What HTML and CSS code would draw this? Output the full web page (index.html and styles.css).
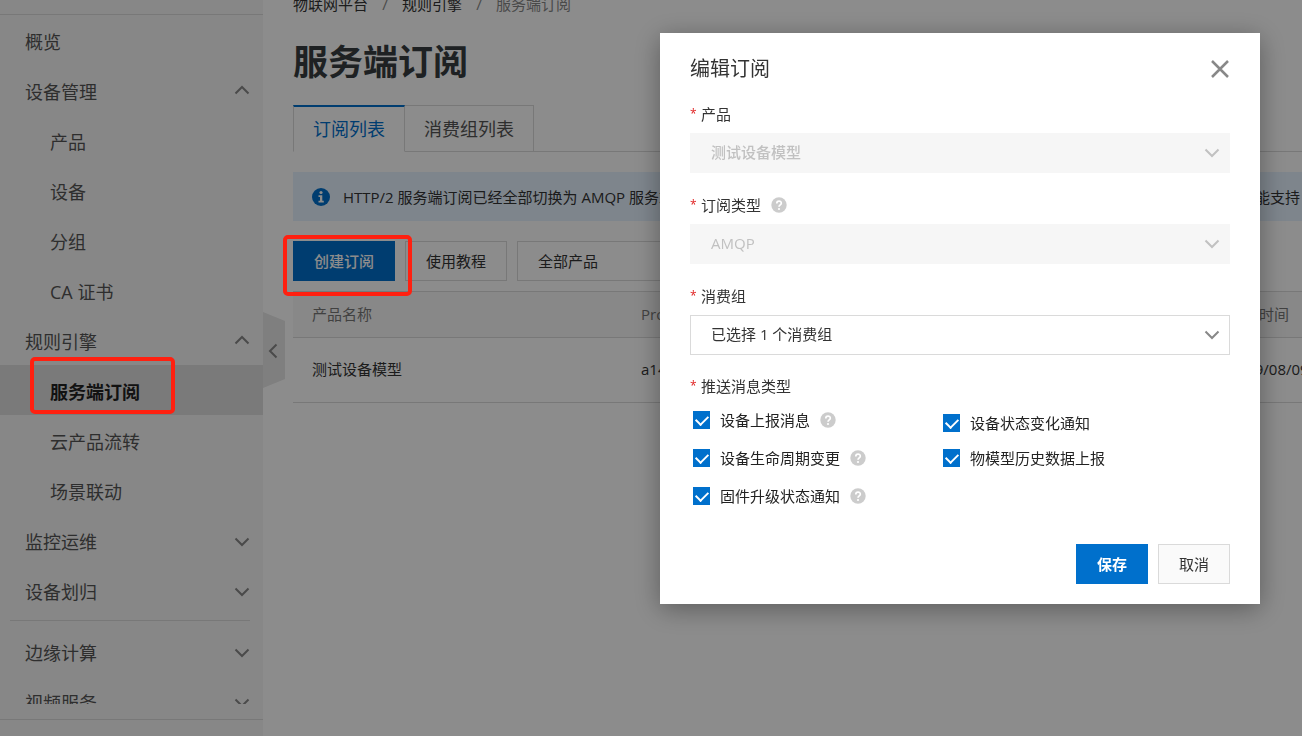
FILE: index.html
```html
<!DOCTYPE html>
<html lang="zh-CN">
<head>
<meta charset="utf-8">
<title>服务端订阅</title>
<link rel="stylesheet" href="styles.css">
</head>
<body>
<svg width="0" height="0" class="sprite" aria-hidden="true">
  <symbol id="down" viewBox="0 0 16 16"><path d="M1.5 4.5 8 11l6.500-6.500"/></symbol>
  <symbol id="up" viewBox="0 0 16 16"><path d="M1.500 9.500 8 3l6.500 6.500"/></symbol>
  <symbol id="left" viewBox="0 0 16 16"><path d="M11.500 1.500 5 8l6.500 6.500"/></symbol>
  <symbol id="help" viewBox="0 0 16 16"><circle cx="8" cy="8" r="7.700" fill="#ccc" stroke="none"/><path d="M5.800 6.400C5.800 3.400 10.400 3.500 10.300 6.200 10.300 7.800 8 7.900 8 9.700" stroke="#fff" stroke-width="1.700"/><circle cx="8" cy="12" r="1.100" fill="#fff" stroke="none"/></symbol>
</svg>

<div class="app">
  <aside class="sidebar">
    <div class="sidebar-top"></div>
    <nav class="menu">
      <a class="item" href="#"><span>概览</span></a>
      <a class="item" href="#"><span>设备管理</span><svg class="icon"><use href="#up"/></svg></a>
      <a class="item sub" href="#"><span>产品</span></a>
      <a class="item sub" href="#"><span>设备</span></a>
      <a class="item sub" href="#"><span>分组</span></a>
      <a class="item sub" href="#"><span>CA 证书</span></a>
      <a class="item" href="#"><span>规则引擎</span><svg class="icon"><use href="#up"/></svg></a>
      <a class="item sub active" href="#"><span>服务端订阅</span></a>
      <a class="item sub" href="#"><span>云产品流转</span></a>
      <a class="item sub" href="#"><span>场景联动</span></a>
      <a class="item" href="#"><span>监控运维</span><svg class="icon"><use href="#down"/></svg></a>
      <a class="item" href="#"><span>设备划归</span><svg class="icon"><use href="#down"/></svg></a>
      <hr class="divider">
      <a class="item" href="#"><span>边缘计算</span><svg class="icon"><use href="#down"/></svg></a>
      <a class="item" href="#"><span>视频服务</span><svg class="icon"><use href="#down"/></svg></a>
    </nav>
    <div class="sidebar-bottom"></div>
    <button class="collapse" type="button" aria-label="收起"><svg class="icon"><use href="#left"/></svg></button>
  </aside>

  <main class="main">
    <nav class="crumbs">
      <a href="#">物联网平台</a><i>/</i><a href="#">规则引擎</a><i>/</i><span>服务端订阅</span>
    </nav>
    <h1 class="heading">服务端订阅</h1>
    <div class="tabs">
      <button class="tab current" type="button">订阅列表</button>
      <button class="tab" type="button">消费组列表</button>
    </div>
    <div class="notice">
      <svg class="info" viewBox="0 0 18 18"><circle cx="9" cy="9" r="9" fill="#0070cc"/><circle cx="9" cy="4.500" r="1.600" fill="#fff"/><path d="M6.500 7.200h3.800v5.600h1.500v1.700H6.500v-1.700H8V8.900H6.500z" fill="#fff"/></svg>
      <span>HTTP/2 服务端订阅已经全部切换为 AMQP 服务端</span>
      <span class="notice-end">能支持</span>
    </div>
    <div class="toolbar">
      <button class="btn primary" type="button">创建订阅</button>
      <button class="btn" type="button">使用教程</button>
      <select class="select filter" aria-label="产品"><option>全部产品</option></select>
    </div>
    <table class="table">
      <colgroup><col class="col-name"><col><col class="col-time"></colgroup>
      <thead><tr><th>产品名称</th><th>ProductKey</th><th>创建时间</th></tr></thead>
      <tbody><tr><td>测试设备模型</td><td>a14</td><td>2019/08/09</td></tr></tbody>
    </table>
  </main>
</div>

<div class="overlay">
  <form class="dialog" role="dialog" aria-labelledby="dialog-title">
    <header class="dialog-head">
      <h2 id="dialog-title">编辑订阅</h2>
      <button class="close" type="button" aria-label="关闭"><svg viewBox="0 0 20 20"><path d="M2 2l16 16M18 2 2 18"/></svg></button>
    </header>

    <div class="field">
      <div class="label"><b>*</b><label for="product">产品</label></div>
      <div class="control off"><select class="select" id="product" disabled><option>测试设备模型</option></select><svg class="icon"><use href="#down"/></svg></div>
    </div>
    <div class="field">
      <div class="label"><b>*</b><label for="type">订阅类型</label><svg class="help"><use href="#help"/></svg></div>
      <div class="control off"><select class="select" id="type" disabled><option>AMQP</option></select><svg class="icon"><use href="#down"/></svg></div>
    </div>
    <div class="field">
      <div class="label"><b>*</b><label for="group">消费组</label></div>
      <div class="control"><select class="select" id="group"><option>已选择 1 个消费组</option></select><svg class="icon"><use href="#down"/></svg></div>
    </div>

    <div class="label push"><b>*</b><span>推送消息类型</span></div>
    <div class="checks">
      <div class="check-col">
        <div class="check"><label><input type="checkbox" checked>设备上报消息</label><svg class="help"><use href="#help"/></svg></div>
        <div class="check"><label><input type="checkbox" checked>设备生命周期变更</label><svg class="help"><use href="#help"/></svg></div>
        <div class="check"><label><input type="checkbox" checked>固件升级状态通知</label><svg class="help"><use href="#help"/></svg></div>
      </div>
      <div class="check-col tight">
        <div class="check"><label><input type="checkbox" checked>设备状态变化通知</label></div>
        <div class="check"><label><input type="checkbox" checked>物模型历史数据上报</label></div>
      </div>
    </div>

    <footer class="actions">
      <button class="btn primary" type="button">保存</button>
      <button class="btn" type="button">取消</button>
    </footer>
  </form>
</div>

<div class="mark mark-menu"></div>
<div class="mark mark-create"></div>
</body>
</html>
```
FILE: styles.css
```css
* { box-sizing: border-box; }

body {
  margin: 0;
  overflow: hidden;
  background: #fff;
  color: #333;
  font: 15px/20px "Open Sans", "Noto Sans CJK SC", sans-serif;
}

a { color: inherit; text-decoration: none; }
button, select, input { margin: 0; font: inherit; color: inherit; }

.sprite { position: absolute; }
.icon, .help {
  flex: none;
  width: 16px;
  height: 16px;
  fill: none;
  stroke: #888;
  stroke-width: 2;
}

.app { display: flex; height: 100vh; }

/* Sidebar */
.sidebar {
  position: relative;
  flex: none;
  display: flex;
  flex-direction: column;
  width: 263px;
  background: #f6f6f6;
  font-size: 18px;
}
.sidebar-top { flex: none; height: 15px; border-bottom: 1px solid #dadada; }
.menu { flex: 1; min-height: 0; overflow: hidden; }
.sidebar-bottom { flex: none; height: 17px; margin-top: 15px; border-top: 1px solid #dadada; }
.item {
  display: flex;
  align-items: center;
  justify-content: space-between;
  height: 50px;
  padding: 4px 13px 0 25px;
  color: #555;
}
.item.sub { padding-left: 50px; }
.item.active { background: #dedede; color: #222; font-weight: 700; }
.divider { margin: 5px 13px 5px 10px; border: 0; border-top: 1px solid #dadada; }
.collapse {
  position: absolute;
  top: 312px;
  left: 100%;
  width: 22px;
  height: 76px;
  padding: 2px 0 0 2px;
  border: 0;
  background: #e7e7e7;
  clip-path: polygon(0 0, 100% 9px, 100% 67px, 0 100%);
}
.collapse .icon { display: block; }

/* Content */
.main { flex: 1; min-width: 0; padding-left: 30px; overflow: hidden; }
.crumbs { display: flex; height: 14px; margin-top: -6px; color: #888; }
.crumbs a { color: #333; }
.crumbs i { width: 34px; text-align: center; font-style: normal; }
.heading { margin: 29px 0 18px; font-size: 35px; line-height: 50px; color: #373d41; }
.tabs { display: flex; border-bottom: 1px solid #dadada; }
.tab {
  height: 47px;
  margin-bottom: -1px;
  padding: 0 19px;
  border: 1px solid #dadada;
  border-left: 0;
  background: #fff;
  font-size: 18px;
  color: #555;
}
.tab.current {
  border-left: 1px solid #dadada;
  border-top: 2px solid #0070cc;
  border-bottom-color: #fff;
  color: #0070cc;
}
.notice {
  display: flex;
  align-items: center;
  height: 49px;
  margin-top: 20px;
  padding: 0 2px 0 19px;
  background: #e5f2ff;
  white-space: nowrap;
}
.info { width: 18px; height: 18px; margin-right: 13px; }
.notice-end { margin-left: auto; }
.toolbar { display: flex; gap: 10px; margin: 20px 0 10px; }

.btn {
  height: 40px;
  padding: 0 20px;
  border: 1px solid #dadada;
  background: #fff;
}
.btn.primary { border-color: #0070cc; background: #0070cc; color: #fff; font-weight: 500; }

.select {
  appearance: none;
  width: 100%;
  height: 40px;
  padding: 0 40px 0 20px;
  border: 1px solid #dadada;
  border-radius: 0;
  background: #fff;
  opacity: 1;
}
.filter { width: 200px; }

.table { width: 100%; table-layout: fixed; border-collapse: collapse; }
.table th, .table td {
  padding: 0 0 2px 19px;
  border-bottom: 1px solid #dadada;
  text-align: left;
  white-space: nowrap;
}
.table th { height: 46px; border-top: 1px solid #dadada; background: #f7f7f7; font-weight: 400; color: #777; }
.table td { height: 65px; }
.col-name { width: 329px; }
.col-time { width: 92px; }

/* Dialog */
.overlay {
  position: fixed;
  inset: 0;
  display: flex;
  justify-content: flex-end;
  align-items: flex-start;
  padding: 33px 42px;
  background: rgba(0, 0, 0, .45);
}
.dialog {
  width: 600px;
  padding: 0 30px 20px;
  background: #fff;
  box-shadow: 0 5px 25px rgba(0, 0, 0, .35);
}
.dialog-head { display: flex; align-items: center; justify-content: space-between; height: 64px; padding-top: 7px; }
.dialog-head h2 { margin: 0; font-size: 20px; font-weight: 400; }
.close { width: 20px; height: 20px; padding: 0; border: 0; background: none; }
.close svg { display: block; fill: none; stroke: #888; stroke-width: 2.500; }

.field { margin-bottom: 15px; }
.label { display: flex; align-items: center; height: 36px; padding-bottom: 2px; }
.label b { width: 11px; font-size: 12px; font-weight: 400; color: #e02020; }
.help { margin-left: 10px; }
.control { position: relative; }
.control .icon { position: absolute; top: 12px; right: 10px; pointer-events: none; }
.control .select { padding-bottom: 2px; }
.off .select { border-color: #f6f6f6; background: #f6f6f6; color: #c1c1c1; font-weight: 500; }
.off .icon { stroke: #c1c1c1; }

.push { height: 31px; padding: 0; }
.checks { display: grid; grid-template-columns: 250px 1fr; padding-left: 3px; color: #222; }
.check { display: flex; align-items: center; height: 38px; }
.check label { display: flex; align-items: center; gap: 10px; }
.tight { padding-top: 4px; }
.tight .check { height: 35px; }
.check input {
  appearance: none;
  display: grid;
  place-items: center;
  width: 17px;
  height: 18px;
  background: #0070cc;
}
.check input::before {
  content: "";
  width: 6px;
  height: 10px;
  margin-bottom: 2px;
  border: solid #fff;
  border-width: 0 2px 2px 0;
  transform: rotate(45deg);
}

.actions { display: flex; justify-content: flex-end; gap: 10px; margin-top: 29px; }
.actions .btn { background: #fafafa; }
.actions .primary { background: #0070cc; font-weight: 700; }

/* Highlight frames drawn over the page */
.mark { position: absolute; border: 4px solid #ff2010; border-radius: 5px; pointer-events: none; }
.mark-menu { top: 357px; left: 30px; width: 145px; height: 57px; }
.mark-create { top: 235px; left: 283px; width: 129px; height: 61px; }
```
